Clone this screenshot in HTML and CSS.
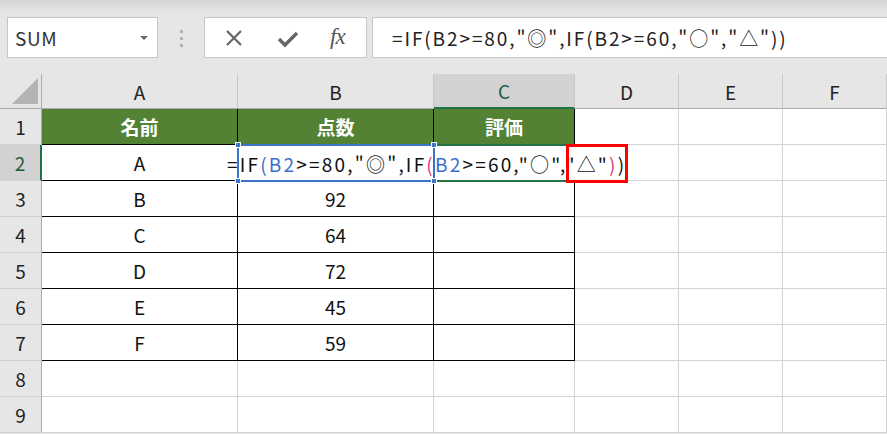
FILE: index.html
```html
<!DOCTYPE html>
<html lang="ja">
<head>
<meta charset="utf-8">
<link rel="stylesheet" href="styles.css">
</head>
<body>
<div class="app">
  <div class="toolbar">
    <div class="namebox">
      <span class="name">SUM</span>
      <span class="caret"></span>
    </div>
    <div class="grip"><i></i><i></i><i></i></div>
    <div class="btns">
      <svg class="ico" width="20" height="20" viewBox="0 0 20 20"><path d="M3 3 L17 17 M17 3 L3 17" stroke="#666" stroke-width="2.2" fill="none"/></svg>
      <svg class="ico" width="22" height="20" viewBox="0 0 22 20"><path d="M2 10 L8 16 L20 4" stroke="#666" stroke-width="3.4" fill="none" stroke-linejoin="miter"/></svg>
      <span class="fx">fx</span>
    </div>
    <div class="fbar"><span class="ftext">=IF(B2&gt;=80,"◎",IF(B2&gt;=60,"○","△"))</span></div>
  </div>

  <div class="sheet">
    <div class="grid">
      <div class="corner"><span class="tri"></span></div>
      <div class="ch">A</div><div class="ch">B</div><div class="ch sel">C</div><div class="ch">D</div><div class="ch">E</div><div class="ch">F</div>

      <div class="rh">1</div>
      <div class="c t hd">名前</div><div class="c t hd">点数</div><div class="c t hd">評価</div><div class="c"></div><div class="c"></div><div class="c"></div>

      <div class="rh sel">2</div>
      <div class="c t">A</div><div class="c t"></div><div class="c t"></div><div class="c"></div><div class="c"></div><div class="c"></div>

      <div class="rh">3</div>
      <div class="c t">B</div><div class="c t">92</div><div class="c t"></div><div class="c"></div><div class="c"></div><div class="c"></div>

      <div class="rh">4</div>
      <div class="c t">C</div><div class="c t">64</div><div class="c t"></div><div class="c"></div><div class="c"></div><div class="c"></div>

      <div class="rh">5</div>
      <div class="c t">D</div><div class="c t">72</div><div class="c t"></div><div class="c"></div><div class="c"></div><div class="c"></div>

      <div class="rh">6</div>
      <div class="c t">E</div><div class="c t">45</div><div class="c t"></div><div class="c"></div><div class="c"></div><div class="c"></div>

      <div class="rh">7</div>
      <div class="c t">F</div><div class="c t">59</div><div class="c t"></div><div class="c"></div><div class="c"></div><div class="c"></div>

      <div class="rh">8</div>
      <div class="c"></div><div class="c"></div><div class="c"></div><div class="c"></div><div class="c"></div><div class="c"></div>

      <div class="rh">9</div>
      <div class="c"></div><div class="c"></div><div class="c"></div><div class="c"></div><div class="c"></div><div class="c"></div>
    </div>

    <div class="active"></div>
    <div class="editor">=IF<span class="b">(</span><span class="b">B2</span>&gt;=80,"◎",IF<span class="p">(</span><span class="b">B2</span>&gt;=60,"○","△"<span class="p">)</span>)</div>
    <div class="range"><i class="h tl"></i><i class="h tr"></i><i class="h bl"></i><i class="h br"></i></div>
    <div class="mark"></div>
  </div>
</div>
</body>
</html>
```

FILE: styles.css
```css
* { box-sizing: border-box; }
html, body { margin: 0; padding: 0; }
body {
  width: 887px;
  height: 434px;
  overflow: hidden;
  background: #e6e6e6;
  font-family: "Noto Sans CJK JP", "Noto Sans", sans-serif;
  color: #111;
}
.app { width: 887px; }

.toolbar {
  height: 74px;
  display: flex;
  align-items: flex-start;
  padding-top: 17px;
  background: linear-gradient(#d6d6d6 0px, #e4e4e4 12px, #e6e6e6 17px);
}
.namebox {
  margin-left: 7px;
  width: 151px;
  height: 41px;
  background: #fff;
  border: 1px solid #c6c6c6;
  display: flex;
  align-items: center;
  padding-left: 7px;
  position: relative;
}
.name {
  font-size: 19px;
  color: #333;
  letter-spacing: 0.6px;
}
.caret {
  position: absolute;
  right: 9px;
  top: 18px;
  width: 0; height: 0;
  border-left: 4px solid transparent;
  border-right: 4px solid transparent;
  border-top: 4px solid #666;
}
.grip {
  width: 46px;
  height: 41px;
  display: flex;
  flex-direction: column;
  align-items: center;
  justify-content: center;
  gap: 4px;
  padding-top: 1px;
}
.grip i {
  display: block;
  width: 3px; height: 3px;
  background: #b2b2b2;
}
.btns {
  width: 163px;
  height: 41px;
  background: #fff;
  border: 1px solid #c6c6c6;
  display: flex;
  align-items: center;
  padding-left: 19px;
  gap: 0;
}
.btns .ico:first-child { margin-right: 33px; }
.btns .ico:nth-child(2) { margin-right: 31px; margin-top: 2px; }
.fx {
  font-family: "Liberation Serif", "DejaVu Serif", serif;
  font-style: italic;
  font-weight: 400;
  font-size: 23px;
  color: #555;
  letter-spacing: -1px;
  margin-top: -2px;
}
.fbar {
  margin-left: 5px;
  flex: 1;
  height: 41px;
  background: #fff;
  border: 1px solid #c6c6c6;
  border-right: none;
  display: flex;
  align-items: center;
  padding-left: 19px;
}
.ftext {
  font-size: 19px;
  color: #222;
  white-space: nowrap;
  letter-spacing: 1.9px;
}

.sheet { position: relative; background: #fff; }
.grid {
  display: grid;
  grid-template-columns: 42px 196px 196px 141px 104px 104px 104px;
  grid-template-rows: 35px repeat(9, 36px);
}
.corner {
  background: #e6e6e6;
  border-right: 1px solid #ababab;
  border-bottom: 1px solid #ababab;
  position: relative;
}
.tri {
  position: absolute;
  left: 12px; top: 4px;
  width: 0; height: 0;
  border-left: 26px solid transparent;
  border-bottom: 26px solid #b4b4b4;
}
.ch {
  background: #e6e6e6;
  border-right: 1px solid #c8c8c8;
  border-bottom: 1px solid #ababab;
  display: flex;
  align-items: center;
  justify-content: center;
  font-size: 19px;
  color: #222;
}
.ch.sel {
  background: #d2d2d2;
  border-bottom: 2px solid #217346;
  color: #1e5c3a;
}
.rh {
  background: #e6e6e6;
  border-right: 1px solid #ababab;
  border-bottom: 1px solid #d0d0d0;
  display: flex;
  align-items: center;
  justify-content: center;
  font-size: 19px;
  color: #222;
}
.rh.sel {
  background: #d2d2d2;
  border-right: 2px solid #217346;
  color: #1e5c3a;
}
.c {
  border-right: 1px solid #d4d4d4;
  border-bottom: 1px solid #d4d4d4;
  display: flex;
  align-items: center;
  justify-content: center;
  font-size: 19px;
  color: #111;
}
.c.t {
  border-right-color: #000;
  border-bottom-color: #000;
}
.c.hd {
  background: #548235;
  color: #fff;
  font-weight: 700;
}

.active {
  position: absolute;
  left: 433px; top: 70px;
  width: 143px; height: 38px;
  border: 2px solid #217346;
}
.editor {
  position: absolute;
  left: 222px; top: 72px;
  width: 408px; height: 34px;
  background: #fff;
  padding-left: 5px;
  display: flex;
  align-items: center;
  font-size: 19px;
  color: #111;
  white-space: nowrap;
  letter-spacing: 2.2px;
}
.editor .b { color: #3a6fcf; }
.editor .p { color: #e0407f; }
.range {
  position: absolute;
  left: 237px; top: 70px;
  width: 198px; height: 38px;
  border: 2px solid #3c72c8;
}
.range .h {
  position: absolute;
  width: 6px; height: 6px;
  background: #3c72c8;
  border: 1px solid #fff;
}
.range .tl { left: -4px; top: -4px; }
.range .tr { right: -4px; top: -4px; }
.range .bl { left: -4px; bottom: -4px; }
.range .br { right: -4px; bottom: -4px; }
.mark {
  position: absolute;
  left: 566px; top: 70px;
  width: 62px; height: 39px;
  border: 3px solid #ff0000;
}
```
